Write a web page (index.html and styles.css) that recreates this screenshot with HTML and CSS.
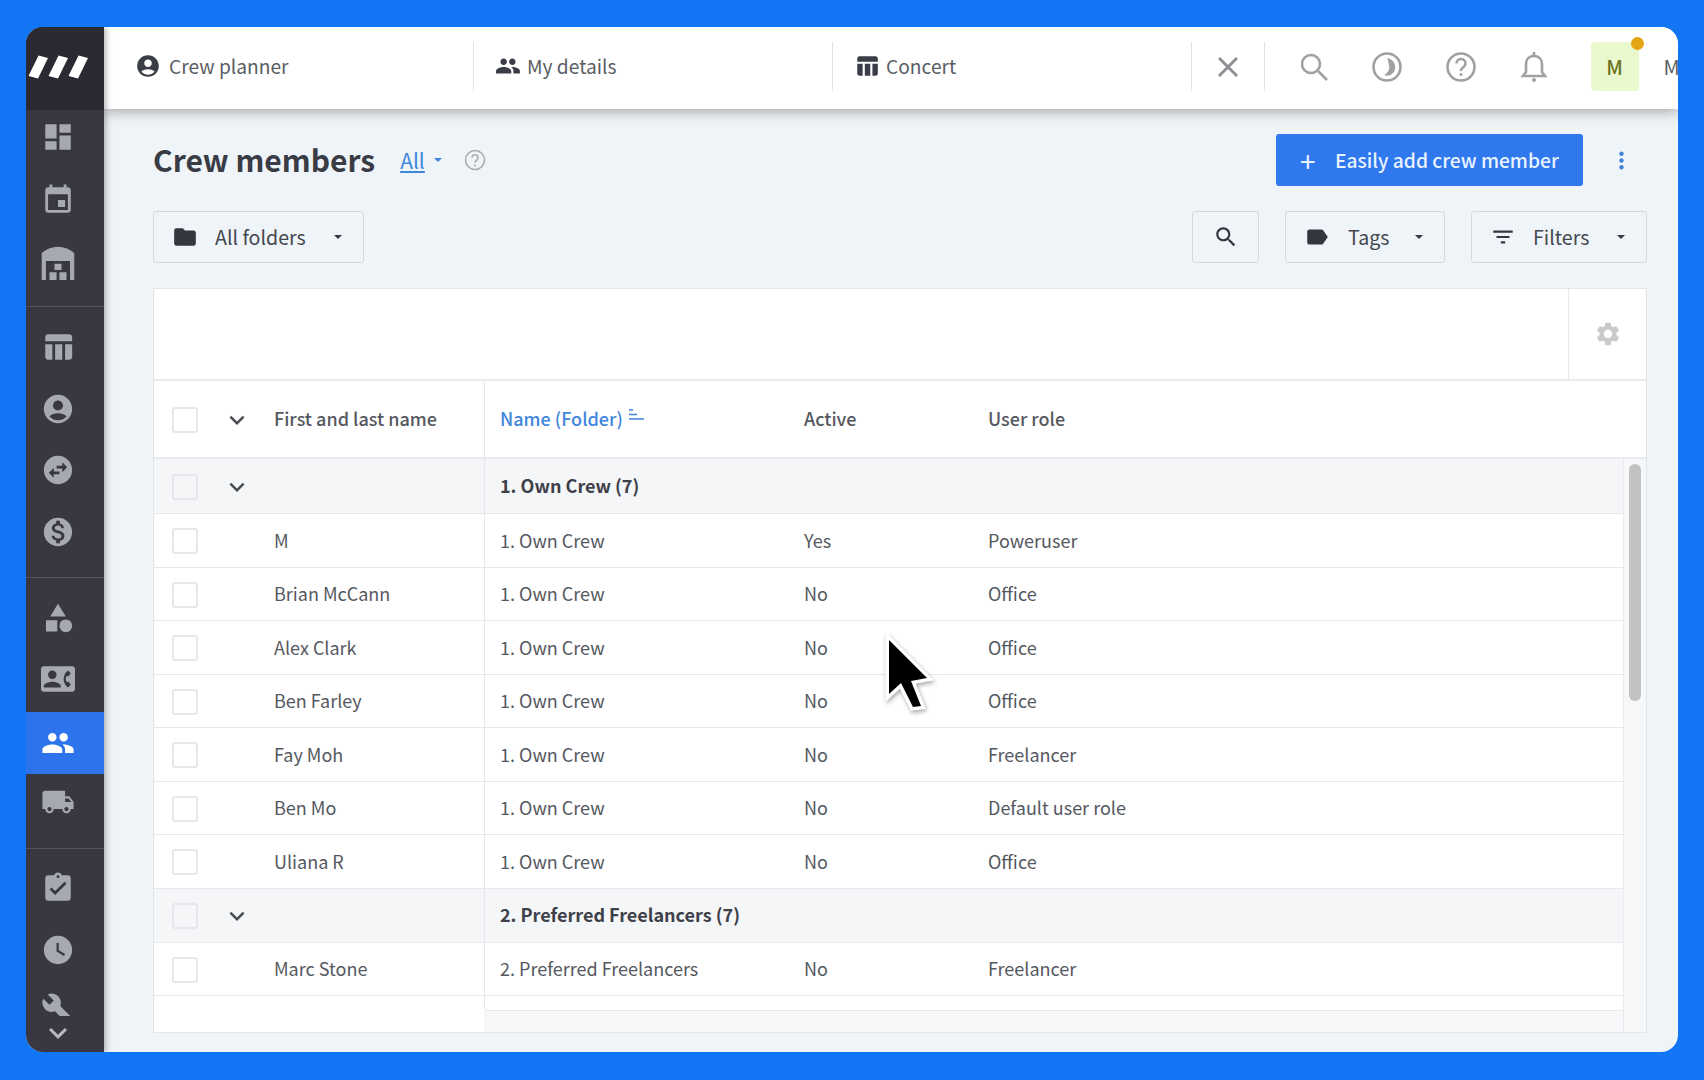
FILE: index.html
```html
<!DOCTYPE html>
<html>
  <head>
    <meta charset="utf-8">
    <title>Crew members</title>
    <link rel="stylesheet" href="styles.css">
  </head>
  <body>
    <svg class="defs">
      <symbol id="i-dashboard" viewBox="0 0 24 24"><path d="M3 13h8V3H3v10zm0 8h8v-6H3v6zm10 0h8V11h-8v10zm0-18v6h8V3h-8z"/></symbol>
      <symbol id="i-event" viewBox="0 0 24 24"><path d="M17 12h-5v5h5v-5zM16 1v2H8V1H6v2H5c-1.11 0-1.99.9-1.99 2L3 19c0 1.1.89 2 2 2h14c1.1 0 2-.9 2-2V5c0-1.1-.9-2-2-2h-1V1h-2zm3 18H5V8h14v11z"/></symbol>
      <symbol id="i-warehouse" viewBox="0 0 24 24"><path d="M12 .5c4 0 8 1.500 11.500 4.500V24h-3V10.500H3.500V24h-3V5C4 2 8 .5 12 .5zM9.500 12.500h5V17h-5zM6 18.500h5V24H6zM13 18.500h5V24h-5z"/></symbol>
      <symbol id="i-table" viewBox="0 0 24 24"><path d="M10 10.020h5V21h-5zM17 21h3c1.100 0 2-.9 2-2v-9h-5v11zm3-18H5c-1.100 0-2 .9-2 2v3h19V5c0-1.100-.9-2-2-2zM3 19c0 1.100.9 2 2 2h3V10H3v9z"/></symbol>
      <symbol id="i-account" viewBox="0 0 24 24"><path d="M12 2C6.48 2 2 6.48 2 12s4.48 10 10 10 10-4.48 10-10S17.52 2 12 2zm0 4c1.93 0 3.5 1.57 3.5 3.5S13.93 13 12 13s-3.5-1.57-3.5-3.5S10.07 6 12 6zm0 14c-2.03 0-4.43-.82-6.14-2.88C7.55 15.8 9.68 15 12 15s4.45.8 6.14 2.12C16.43 19.18 14.03 20 12 20z"/></symbol>
      <symbol id="i-swap" viewBox="0 0 24 24"><path d="M22 12c0-5.52-4.48-10-10-10S2 6.48 2 12s4.48 10 10 10 10-4.48 10-10zm-7-5.5l3.5 3.5-3.5 3.5V11h-4V9h4V6.5zm-6 11L5.5 14 9 10.5V13h4v2H9v2.5z"/></symbol>
      <symbol id="i-money" viewBox="0 0 24 24"><path d="M12 2C6.48 2 2 6.48 2 12s4.48 10 10 10 10-4.48 10-10S17.52 2 12 2zm1.41 16.09V20h-2.67v-1.93c-1.71-.36-3.16-1.46-3.27-3.4h1.96c.1 1.05.82 1.87 2.65 1.87 1.96 0 2.4-.98 2.4-1.59 0-.83-.44-1.61-2.67-2.14-2.48-.6-4.18-1.62-4.18-3.67 0-1.72 1.39-2.84 3.11-3.21V4h2.67v1.95c1.86.45 2.79 1.86 2.85 3.39H14.3c-.05-1.11-.64-1.87-2.22-1.87-1.5 0-2.4.68-2.4 1.64 0 .84.65 1.39 2.67 1.91s4.18 1.39 4.18 3.91c-.01 1.83-1.38 2.83-3.12 3.16z"/></symbol>
      <symbol id="i-shapes" viewBox="0 0 24 24"><path d="M12 2l-5.5 9h11zM3.500 13.500h8v8h-8z"/><circle cx="17.500" cy="17.500" r="4.500"/></symbol>
      <symbol id="i-contact" viewBox="0 0 24 24"><path d="M22 3H2C.9 3 0 3.9 0 5v14c0 1.1.9 2 2 2h20c1.1 0 1.99-.9 1.99-2L24 5c0-1.1-.9-2-2-2zM8 6c1.66 0 3 1.34 3 3s-1.34 3-3 3-3-1.34-3-3 1.34-3 3-3zm6 12H2v-1c0-2 4-3.1 6-3.1s6 1.1 6 3.1v1zm3.85-4h1.64L21 16l-1.99 1.99c-1.31-.98-2.28-2.38-2.73-3.99-.18-.64-.28-1.31-.28-2s.1-1.36.28-2c.45-1.62 1.42-3.01 2.73-3.99L21 8l-1.51 2h-1.64c-.22.63-.35 1.3-.35 2s.13 1.37.35 2z"/></symbol>
      <symbol id="i-group" viewBox="0 0 24 24"><path d="M16 11c1.66 0 2.99-1.34 2.99-3S17.66 5 16 5c-1.66 0-3 1.34-3 3s1.34 3 3 3zm-8 0c1.66 0 2.99-1.34 2.99-3S9.66 5 8 5C6.34 5 5 6.34 5 8s1.34 3 3 3zm0 2c-2.33 0-7 1.17-7 3.5V19h14v-2.5c0-2.33-4.67-3.5-7-3.5zm8 0c-.29 0-.62.02-.97.05 1.16.84 1.97 1.97 1.97 3.45V19h6v-2.5c0-2.33-4.67-3.5-7-3.5z"/></symbol>
      <symbol id="i-truck" viewBox="0 0 24 24"><path d="M20 8h-3V4H3c-1.1 0-2 .9-2 2v11h2c0 1.66 1.34 3 3 3s3-1.34 3-3h6c0 1.66 1.34 3 3 3s3-1.34 3-3h2v-5l-3-4zM6 18.5c-.83 0-1.5-.67-1.5-1.5s.67-1.5 1.5-1.5 1.5.67 1.5 1.5-.67 1.5-1.5 1.5zm13.5-9l1.96 2.5H17V9.5h2.5zm-1.5 9c-.83 0-1.5-.67-1.5-1.5s.67-1.5 1.5-1.5 1.5.67 1.5 1.5-.67 1.5-1.5 1.5z"/></symbol>
      <symbol id="i-assign" viewBox="0 0 24 24"><path d="M19 3h-4.18C14.4 1.84 13.3 1 12 1c-1.3 0-2.4.84-2.82 2H5c-1.1 0-2 .9-2 2v14c0 1.1.9 2 2 2h14c1.1 0 2-.9 2-2V5c0-1.1-.9-2-2-2zm-7 0c.55 0 1 .45 1 1s-.45 1-1 1-1-.45-1-1 .45-1 1-1zm-2 14l-4-4 1.41-1.41L10 14.17l6.59-6.59L18 9l-8 8z"/></symbol>
      <symbol id="i-clock" viewBox="0 0 24 24"><path d="M12 2C6.5 2 2 6.5 2 12s4.5 10 10 10 10-4.5 10-10S17.5 2 12 2zm4.2 14.2L11 13V7h1.5v5.2l4.5 2.7-.8 1.3z"/></symbol>
      <symbol id="i-build" viewBox="0 0 24 24"><path d="M22.7 19l-9.1-9.1c.9-2.3.4-5-1.5-6.9-2-2-5-2.4-7.4-1.3L9 6 6 9 1.6 4.7C.4 7.1.9 10.1 2.9 12.1c1.9 1.9 4.6 2.4 6.9 1.5l9.1 9.1c.4.4 1 .4 1.4 0l2.3-2.3c.5-.4.5-1.1.1-1.4z"/></symbol>
      <symbol id="i-chevron" viewBox="0 0 24 24"><path d="M16.59 8.59L12 13.17 7.41 8.59 6 10l6 6 6-6z"/></symbol>
      <symbol id="i-folder" viewBox="0 0 24 24"><path d="M10 4H4c-1.1 0-1.99.9-1.99 2L2 18c0 1.1.9 2 2 2h16c1.1 0 2-.9 2-2V8c0-1.1-.9-2-2-2h-8l-2-2z"/></symbol>
      <symbol id="i-label" viewBox="0 0 24 24"><path d="M17.63 5.84C17.27 5.33 16.67 5 16 5L5 5.01C3.9 5.01 3 5.9 3 7v10c0 1.1.9 1.99 2 1.99L16 19c.67 0 1.27-.33 1.63-.84L22 12l-4.37-6.16z"/></symbol>
      <symbol id="i-search" viewBox="0 0 24 24"><path d="M15.5 14h-.79l-.28-.27C15.41 12.59 16 11.11 16 9.5 16 5.91 13.09 3 9.5 3S3 5.91 3 9.5 5.91 16 9.5 16c1.61 0 3.09-.59 4.23-1.57l.27.28v.79l5 4.99L20.49 19l-4.99-5zm-6 0C7.01 14 5 11.99 5 9.5S7.01 5 9.5 5 14 7.01 14 9.5 11.99 14 9.5 14z"/></symbol>
      <symbol id="i-filter" viewBox="0 0 24 24"><path d="M10 18h4v-2h-4v2zM3 6v2h18V6H3zm3 7h12v-2H6v2z"/></symbol>
      <symbol id="i-gear" viewBox="0 0 24 24"><path d="M19.14 12.94c.04-.3.06-.61.06-.94 0-.32-.02-.64-.07-.94l2.03-1.58a.49.49 0 0 0 .12-.61l-1.92-3.32a.488.488 0 0 0-.59-.22l-2.39.96c-.5-.38-1.03-.7-1.62-.94l-.36-2.54a.484.484 0 0 0-.48-.41h-3.84c-.24 0-.43.17-.47.41l-.36 2.54c-.59.24-1.13.57-1.62.94l-2.39-.96c-.22-.08-.47 0-.59.22L2.74 8.87c-.12.21-.08.47.12.61l2.03 1.58c-.05.3-.09.63-.09.94s.02.64.07.94l-2.03 1.58a.49.49 0 0 0-.12.61l1.92 3.32c.12.22.37.29.59.22l2.39-.96c.5.38 1.03.7 1.62.94l.36 2.54c.05.24.24.41.48.41h3.84c.24 0 .44-.17.47-.41l.36-2.54c.59-.24 1.13-.56 1.62-.94l2.39.96c.22.08.47 0 .59-.22l1.92-3.32c.12-.22.07-.47-.12-.61l-2.01-1.58zM12 15.6c-1.98 0-3.6-1.62-3.6-3.6s1.62-3.6 3.6-3.6 3.6 1.62 3.6 3.6-1.62 3.6-3.6 3.6z"/></symbol>
      <symbol id="i-more" viewBox="0 0 24 24"><path d="M12 8c1.1 0 2-.9 2-2s-.9-2-2-2-2 .9-2 2 .9 2 2 2zm0 2c-1.1 0-2 .9-2 2s.9 2 2 2 2-.9 2-2-.9-2-2-2zm0 6c-1.1 0-2 .9-2 2s.9 2 2 2 2-.9 2-2-.9-2-2-2z"/></symbol>
    </svg>

    <div class="window">
      <div class="sidebar">
        <div class="logo">
          <svg width="60" height="24" viewBox="0 0 60 24"><path d="M10.500.5L20 3 10 23.500.5 21zM30.500.5L40 3 30 23.500 20.500 21zM50.500.5L60 3 50 23.500 40.500 21z"/></svg>
        </div>
        <div class="navGroup navGroup1">
          <div class="navItem"><svg class="navIcon"><use href="#i-dashboard"/></svg></div>
          <div class="navItem"><svg class="navIcon"><use href="#i-event"/></svg></div>
          <div class="navItem"><svg class="navIcon"><use href="#i-warehouse"/></svg></div>
        </div>
        <div class="navGroup navGroup2">
          <div class="navItem"><svg class="navIcon"><use href="#i-table"/></svg></div>
          <div class="navItem"><svg class="navIcon"><use href="#i-account"/></svg></div>
          <div class="navItem"><svg class="navIcon"><use href="#i-swap"/></svg></div>
          <div class="navItem"><svg class="navIcon"><use href="#i-money"/></svg></div>
        </div>
        <div class="navGroup navGroup3">
          <div class="navItem navShapes"><svg class="navIcon"><use href="#i-shapes"/></svg></div>
          <div class="navItem navContact"><svg class="navIcon"><use href="#i-contact"/></svg></div>
          <div class="navItem navActive"><svg class="navIcon"><use href="#i-group"/></svg></div>
          <div class="navItem navTruck"><svg class="navIcon"><use href="#i-truck"/></svg></div>
        </div>
        <div class="navGroup navGroup4">
          <div class="navItem"><svg class="navIcon"><use href="#i-assign"/></svg></div>
          <div class="navItem"><svg class="navIcon"><use href="#i-clock"/></svg></div>
          <div class="navItem navCropped"><svg class="navIcon"><use href="#i-build"/></svg></div>
          <div class="navItem navMore"><svg class="navChevron"><use href="#i-chevron"/></svg></div>
        </div>
      </div>

      <div class="main">
        <div class="topbar">
          <div class="topTab topTabFirst"><svg class="topTabIcon"><use href="#i-account"/></svg>Crew planner</div>
          <div class="topTab"><svg class="topTabIcon"><use href="#i-group"/></svg>My details</div>
          <div class="topTab"><svg class="topTabIcon"><use href="#i-table"/></svg>Concert</div>
          <div class="topClose">
            <svg width="26" height="26" viewBox="0 0 26 26"><path d="M4 4l18 18M22 4L4 22"/></svg>
          </div>
          <div class="topTools">
            <div class="topTool">
              <svg width="32" height="32" viewBox="0 0 32 32"><circle cx="13" cy="13" r="9"/><path d="M20 20l9 9"/></svg>
            </div>
            <div class="topTool">
              <svg width="32" height="32" viewBox="0 0 32 32"><circle cx="16" cy="16" r="13.500"/><path class="filled" d="M16 7c6 1 9 6 8 11-1 5-6 8-11 6 4-2 6-6 5-10-.4-2.500-1-5-2-7z"/></svg>
            </div>
            <div class="topTool">
              <svg width="32" height="32" viewBox="0 0 32 32"><circle cx="16" cy="16" r="13.500"/><path d="M11.500 12.500c0-6 9-6 9 0 0 4-4.500 3.500-4.500 7.500"/><circle class="filled" cx="16" cy="23.500" r="1.500"/></svg>
            </div>
            <div class="topTool">
              <svg width="32" height="34" viewBox="0 0 32 34"><path d="M5 26h22l-3-4V14c0-5-3.500-8-8-8s-8 3-8 8v8zM16 2v4"/><circle class="filled" cx="16" cy="30" r="2"/></svg>
            </div>
          </div>
          <div class="avatar">M<span class="avatarDot"></span></div>
          <div class="userName">M</div>
        </div>

        <div class="content">
          <div class="titleRow">
            <h1 class="title">Crew members</h1>
            <a class="viewLink">All</a>
            <span class="caret caretBlue"></span>
            <svg class="titleHelp" viewBox="0 0 22 22"><circle cx="11" cy="11" r="9.500"/><path d="M8 8.800c0-4 6-4 6 0 0 2.600-3 2.400-3 5"/><circle class="filled" cx="11" cy="16.400" r="1"/></svg>
            <button class="addButton"><span class="addPlus">+</span>Easily add crew member</button>
            <svg class="moreIcon"><use href="#i-more"/></svg>
          </div>

          <div class="filterRow">
            <button class="filterButton foldersButton"><svg class="filterIcon"><use href="#i-folder"/></svg>All folders<span class="caret"></span></button>
            <button class="filterButton searchButton"><svg class="filterIcon"><use href="#i-search"/></svg></button>
            <button class="filterButton tagsButton"><svg class="filterIcon"><use href="#i-label"/></svg>Tags<span class="caret"></span></button>
            <button class="filterButton filtersButton"><svg class="filterIcon"><use href="#i-filter"/></svg>Filters<span class="caret"></span></button>
          </div>

          <div class="tableCard">
            <div class="tableTools">
              <div class="gearCell"><svg class="gearIcon"><use href="#i-gear"/></svg></div>
            </div>
            <div class="row headRow">
              <div class="cellCheck"><span class="check"></span></div>
              <div class="cellToggle"><svg class="chevron"><use href="#i-chevron"/></svg></div>
              <div class="cellName">First and last name</div>
              <div class="cellFolder sortedHead">Name (Folder)
                <svg class="sortIcon" width="15" height="12" viewBox="0 0 15 12"><path d="M0 1h4M0 5.500h8M0 10h15"/></svg>
              </div>
              <div class="cellActive">Active</div>
              <div class="cellRole">User role</div>
            </div>
            <div class="tableBody">
              <div class="rows">
                <div class="row groupRow groupFirst">
                  <div class="cellCheck"><span class="check"></span></div>
                  <div class="cellToggle"><svg class="chevron"><use href="#i-chevron"/></svg></div>
                  <div class="cellName"></div>
                  <div class="cellFolder">1. Own Crew (7)</div>
                </div>
                <div class="row">
                  <div class="cellCheck"><span class="check"></span></div><div class="cellToggle"></div>
                  <div class="cellName">M</div><div class="cellFolder">1. Own Crew</div>
                  <div class="cellActive">Yes</div><div class="cellRole">Poweruser</div>
                </div>
                <div class="row">
                  <div class="cellCheck"><span class="check"></span></div><div class="cellToggle"></div>
                  <div class="cellName">Brian McCann</div><div class="cellFolder">1. Own Crew</div>
                  <div class="cellActive">No</div><div class="cellRole">Office</div>
                </div>
                <div class="row">
                  <div class="cellCheck"><span class="check"></span></div><div class="cellToggle"></div>
                  <div class="cellName">Alex Clark</div><div class="cellFolder">1. Own Crew</div>
                  <div class="cellActive">No</div><div class="cellRole">Office</div>
                </div>
                <div class="row">
                  <div class="cellCheck"><span class="check"></span></div><div class="cellToggle"></div>
                  <div class="cellName">Ben Farley</div><div class="cellFolder">1. Own Crew</div>
                  <div class="cellActive">No</div><div class="cellRole">Office</div>
                </div>
                <div class="row">
                  <div class="cellCheck"><span class="check"></span></div><div class="cellToggle"></div>
                  <div class="cellName">Fay Moh</div><div class="cellFolder">1. Own Crew</div>
                  <div class="cellActive">No</div><div class="cellRole">Freelancer</div>
                </div>
                <div class="row">
                  <div class="cellCheck"><span class="check"></span></div><div class="cellToggle"></div>
                  <div class="cellName">Ben Mo</div><div class="cellFolder">1. Own Crew</div>
                  <div class="cellActive">No</div><div class="cellRole">Default user role</div>
                </div>
                <div class="row">
                  <div class="cellCheck"><span class="check"></span></div><div class="cellToggle"></div>
                  <div class="cellName">Uliana R</div><div class="cellFolder">1. Own Crew</div>
                  <div class="cellActive">No</div><div class="cellRole">Office</div>
                </div>
                <div class="row groupRow">
                  <div class="cellCheck"><span class="check"></span></div>
                  <div class="cellToggle"><svg class="chevron"><use href="#i-chevron"/></svg></div>
                  <div class="cellName"></div>
                  <div class="cellFolder">2. Preferred Freelancers (7)</div>
                </div>
                <div class="row">
                  <div class="cellCheck"><span class="check"></span></div><div class="cellToggle"></div>
                  <div class="cellName">Marc Stone</div><div class="cellFolder">2. Preferred Freelancers</div>
                  <div class="cellActive">No</div><div class="cellRole">Freelancer</div>
                </div>
                <div class="rowsEnd"><div class="rowsEndLeft"></div><div class="rowsEndRight"></div></div>
              </div>
              <div class="scrollTrack"><div class="scrollThumb"></div></div>
            </div>
          </div>
        </div>
      </div>

      <svg class="cursor" width="64" height="92" viewBox="0 0 64 92">
        <path d="M6 6L44 44 28 47 38 72 30 73 18 49 6 60z"/>
      </svg>
    </div>
  </body>
</html>
```

FILE: styles.css
```css
html, body {
  margin: 0;
  height: 100%;
}

body {
  padding: 27px 26px 28px;
  box-sizing: border-box;
  overflow: hidden;
  background-color: #1275f4;
  font-family: "Noto Sans CJK JP", "Noto Sans", sans-serif;
  font-size: 18px;
  color: #55585f;
}

.defs {
  display: none;
}

.window {
  position: relative;
  display: flex;
  width: 1652px;
  height: 1025px;
  overflow: hidden;
  border-radius: 17px;
  background-color: #eff4f8;
}

/* sidebar */

.sidebar {
  flex: 0 0 78px;
  z-index: 3;
  display: flex;
  flex-direction: column;
  background-color: #393741;
  box-shadow: 2px 0 6px rgba(40, 40, 50, 0.35);
}

.logo {
  flex: 0 0 83px;
  display: flex;
  align-items: center;
  padding: 0 0 4px 2px;
  box-sizing: border-box;
  background-color: #2b2a33;
  fill: white;
}

.navGroup {
  display: flex;
  flex-direction: column;
  box-sizing: border-box;
  border-bottom: 1px solid #55545d;
}

.navItem {
  display: flex;
  align-items: center;
  justify-content: center;
  padding-right: 14px;
  height: 34px;
  flex: none;
}

.navIcon {
  width: 34px;
  height: 34px;
  fill: #a7a9b1;
}

.navGroup1 {
  height: 197px;
  padding-top: 10px;
  gap: 29px;
}

.navGroup2 {
  height: 271px;
  padding-top: 23px;
  gap: 27.5px;
}

.navGroup3 {
  height: 271px;
  padding-top: 23px;
}

.navShapes {
  margin-bottom: 27px;
}

.navContact {
  margin-bottom: 16px;
}

.navActive {
  height: 62px;
  background-color: #2d74ec;
}

.navActive .navIcon {
  fill: white;
}

.navTruck {
  margin-top: 11px;
}

.navGroup4 {
  flex: 1;
  padding-top: 22px;
  gap: 28px;
  border-bottom: none;
}

.navCropped {
  height: 24px;
  margin-top: -3px;
  align-items: flex-start;
  overflow: hidden;
}

.navMore {
  height: 24px;
  margin-top: -23px;
}

.navChevron {
  width: 36px;
  height: 36px;
  flex: none;
  fill: #b9bac0;
}

/* top bar */

.main {
  flex: 1;
  min-width: 0;
  display: flex;
  flex-direction: column;
}

.topbar {
  flex: 0 0 82px;
  z-index: 2;
  padding-bottom: 3px;
  box-sizing: border-box;
  display: flex;
  align-items: center;
  overflow: hidden;
  background-color: white;
  box-shadow: 0 3px 12px rgba(60, 60, 60, 0.4);
}

.topTab {
  flex: none;
  width: 359px;
  height: 49px;
  padding: 0 0 2px 21px;
  box-sizing: border-box;
  display: flex;
  align-items: center;
  gap: 6px;
  border-left: 1px solid #e2e3e5;
  font-size: 19.2px;
  color: #5a5d64;
}

.topTabFirst {
  width: 369px;
  padding-left: 31px;
  gap: 8px;
  border-left: none;
}

.topTabIcon {
  width: 26px;
  height: 26px;
  fill: #3a3d46;
}

.topClose {
  flex: none;
  width: 74px;
  height: 49px;
  box-sizing: border-box;
  display: flex;
  align-items: center;
  justify-content: center;
  border-left: 1px solid #e2e3e5;
  border-right: 1px solid #e2e3e5;
  fill: none;
  stroke: #8e9094;
  stroke-width: 3;
}

.topTools {
  flex: none;
  display: flex;
  padding-left: 12px;
}

.topTool {
  width: 73.5px;
  display: flex;
  align-items: center;
  justify-content: center;
  fill: none;
  stroke: #9fa1a5;
  stroke-width: 2.6;
}

.topTool .filled {
  fill: #9fa1a5;
  stroke: none;
}

.avatar {
  position: relative;
  flex: none;
  width: 48px;
  height: 49px;
  margin-left: 19.5px;
  display: flex;
  align-items: center;
  justify-content: center;
  border-radius: 4px;
  background-color: #eaf8ce;
  color: #6b7323;
  font-size: 20px;
  font-weight: 500;
}

.avatarDot {
  position: absolute;
  top: -5px;
  right: -5px;
  width: 13px;
  height: 13px;
  border-radius: 50%;
  background-color: #e3a612;
}

.userName {
  flex: none;
  margin-left: 25px;
  font-size: 20px;
  color: #5a5d64;
}

/* content */

.content {
  flex: 1;
  min-height: 0;
  display: flex;
  flex-direction: column;
  padding: 25px 31px 19px 49px;
}

.titleRow {
  flex: 0 0 52px;
  display: flex;
  align-items: center;
}

.title {
  margin: -2px 25px 0 0;
  font-size: 30px;
  font-weight: 700;
  color: #393c45;
}

.viewLink {
  font-size: 21px;
  color: #3f86dc;
  text-decoration: underline;
}

.caret {
  display: inline-block;
  width: 0;
  height: 0;
  margin-left: auto;
  border-left: 4px solid transparent;
  border-right: 4px solid transparent;
  border-top: 4px solid #33363e;
}

.caretBlue {
  margin-left: 9px;
  border-top-color: #3f86dc;
}

.titleHelp {
  width: 22px;
  height: 22px;
  margin-left: 22px;
  fill: none;
  stroke: #a9abaf;
  stroke-width: 1.6;
}

.titleHelp .filled {
  fill: #a9abaf;
  stroke: none;
}

.addButton {
  margin-left: auto;
  width: 307px;
  height: 52px;
  padding: 0 0 0 24px;
  display: flex;
  align-items: center;
  border: none;
  border-radius: 3px;
  background-color: #2f78ee;
  color: #e9f2ff;
  font-family: inherit;
  font-size: 19.2px;
  font-weight: 500;
}

.addPlus {
  width: 35px;
  font-size: 28px;
  font-weight: 400;
  line-height: 1;
  text-align: left;
}

.moreIcon {
  width: 27px;
  height: 27px;
  margin: 0 12px 0 25px;
  fill: #3f7fd8;
}

.filterRow {
  flex: 0 0 52px;
  margin-top: 25px;
  display: flex;
  gap: 26px;
}

.filterButton {
  height: 52px;
  padding: 0 20px 0 18px;
  box-sizing: border-box;
  display: flex;
  align-items: center;
  border: 1px solid #d6d9dc;
  border-radius: 3px;
  background: transparent;
  font-family: inherit;
  font-size: 19.6px;
  line-height: 46px;
  color: #44474f;
}

.filterIcon {
  width: 26px;
  height: 26px;
  flex: none;
  fill: #33363e;
}

.foldersButton {
  width: 211px;
  gap: 17px;
}

.searchButton {
  width: 67px;
  padding: 0;
  margin-left: auto;
  justify-content: center;
}

.tagsButton {
  width: 160px;
  gap: 18px;
}

.filtersButton {
  width: 176px;
  gap: 17px;
}

.filterButton .caret {
  margin-right: 1px;
}

/* table */

.tableCard {
  flex: 1;
  margin-top: 25px;
  min-height: 0;
  display: flex;
  flex-direction: column;
  box-sizing: border-box;
  border: 1px solid #e3e6e9;
  background-color: white;
}

.tableTools {
  flex: 0 0 92px;
  display: flex;
  justify-content: flex-end;
  box-sizing: border-box;
  border-bottom: 2px solid #e9ebee;
}

.gearCell {
  width: 77px;
  display: flex;
  align-items: center;
  justify-content: center;
  border-left: 1px solid #e6e8eb;
}

.gearIcon {
  width: 28px;
  height: 28px;
  fill: #c9cacc;
}

.row {
  display: grid;
  grid-template-columns: 64px 38px 228px 320px 184px 1fr;
  height: 53.5px;
  box-sizing: border-box;
  border-bottom: 1px solid #e6e8eb;
  align-items: stretch;
}

.row > div {
  display: flex;
  align-items: center;
  padding-bottom: 1.5px;
}

.headRow {
  height: 78px;
  font-weight: 500;
  border-bottom: 2px solid #e9ebee;
}

.groupRow {
  background-color: #f5f6f8;
  font-weight: 700;
  color: #3e4149;
  height: 54px;
}

.groupFirst {
  height: 55px;
}

.cellCheck {
  padding-left: 18px;
}

.check {
  width: 26px;
  height: 26px;
  margin-top: 3.5px;
  box-sizing: border-box;
  border: 2px solid #e5e7ea;
  border-radius: 3px;
}

.cellToggle {
  justify-content: center;
}

.chevron {
  width: 30px;
  height: 30px;
  margin-top: 3.5px;
  fill: #494c54;
}

.cellName {
  padding-left: 18px;
}

.row > .cellFolder {
  padding-left: 15px;
  border-left: 1px solid #e6e8eb;
  white-space: nowrap;
}

.sortedHead {
  color: #3f86dc;
  gap: 6px;
}

.sortIcon {
  margin-bottom: 6px;
  fill: none;
  stroke: #3f86dc;
  stroke-width: 1.6;
}

.tableBody {
  flex: 1;
  min-height: 0;
  display: flex;
}

.rows {
  flex: 0 0 1469px;
  display: flex;
  flex-direction: column;
  border-right: 1px solid #e9ebee;
  background-color: white;
}

.rowsEnd {
  flex: 1;
  display: flex;
  background-color: #f6f7f8;
}

.rowsEndLeft {
  flex: 0 0 330px;
  background-color: white;
}

.rowsEndRight {
  flex: 1;
  height: 15px;
  box-sizing: border-box;
  border-left: 1px solid #e6e8eb;
  border-bottom: 1px solid #e6e8eb;
  border-bottom-left-radius: 4px;
  background-color: white;
}

.scrollTrack {
  flex: 1;
  padding: 5px 4px 0 5px;
  background-color: #f6f7f8;
}

.scrollThumb {
  width: 12px;
  height: 237px;
  border-radius: 6px;
  background-color: #c1c2c3;
}

.cursor {
  position: absolute;
  left: 857px;
  top: 607px;
  z-index: 4;
  fill: black;
  stroke: white;
  stroke-width: 7;
  stroke-miterlimit: 6;
  paint-order: stroke;
  filter: drop-shadow(1px 2px 2px rgba(0, 0, 0, 0.35));
}
```
